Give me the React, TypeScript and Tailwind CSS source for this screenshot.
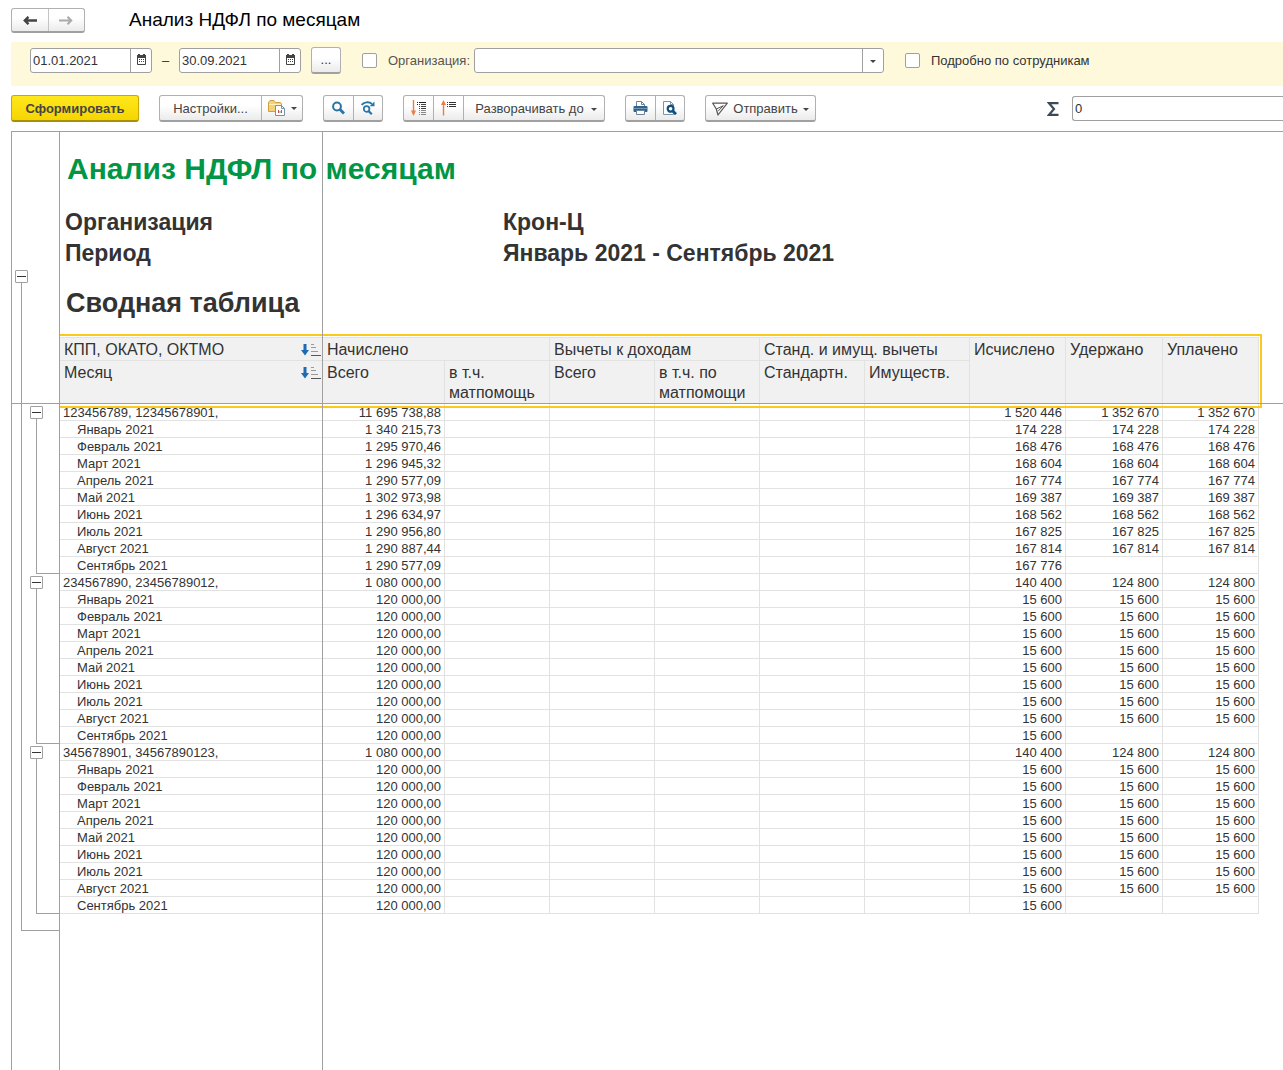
import type { ReactNode } from 'react';

interface Group {
  code: string;
  total: string[];
  months: string[][];
}

const monthNames = [
  'Январь 2021', 'Февраль 2021', 'Март 2021', 'Апрель 2021', 'Май 2021',
  'Июнь 2021', 'Июль 2021', 'Август 2021', 'Сентябрь 2021',
];

// Each row: accrued, calculated, withheld, paid
const flatMonths: string[][] = monthNames.map((_, i) =>
  i < 8 ? ['120 000,00', '15 600', '15 600', '15 600'] : ['120 000,00', '15 600', '', '']
);

const groups: Group[] = [
  {
    code: '123456789, 12345678901,',
    total: ['11 695 738,88', '1 520 446', '1 352 670', '1 352 670'],
    months: [
      ['1 340 215,73', '174 228', '174 228', '174 228'],
      ['1 295 970,46', '168 476', '168 476', '168 476'],
      ['1 296 945,32', '168 604', '168 604', '168 604'],
      ['1 290 577,09', '167 774', '167 774', '167 774'],
      ['1 302 973,98', '169 387', '169 387', '169 387'],
      ['1 296 634,97', '168 562', '168 562', '168 562'],
      ['1 290 956,80', '167 825', '167 825', '167 825'],
      ['1 290 887,44', '167 814', '167 814', '167 814'],
      ['1 290 577,09', '167 776', '', ''],
    ],
  },
  { code: '234567890, 23456789012,', total: ['1 080 000,00', '140 400', '124 800', '124 800'], months: flatMonths },
  { code: '345678901, 34567890123,', total: ['1 080 000,00', '140 400', '124 800', '124 800'], months: flatMonths },
];

const groupClass =
  'flex h-[27px] shrink-0 rounded-[3px] border border-[#b0b0b0] border-b-2 border-b-[#a0a0a0] bg-linear-to-b from-white from-40% to-[#ebebeb] text-[#444]';
const partClass = 'flex items-center justify-center border-r border-[#b0b0b0] last:border-r-0';

function Caret() {
  return (
    <svg className="h-[4px] w-[6px] shrink-0" viewBox="0 0 6 4" fill="#444" aria-hidden="true">
      <path d="M0 1h6L3 4z" />
    </svg>
  );
}

function CalendarIcon() {
  return (
    <svg className="h-[11px] w-[9px]" viewBox="0 0 9 11" aria-hidden="true">
      <path d="M.5 2.5h8v8h-8z" fill="#fff" stroke="#444" />
      <path d="M0 1h9v3H0zM1 0h2v2H1zM6 0h2v2H6z" fill="#444" />
      <path d="M2 5.5h5M2 7.5h5" stroke="#444" strokeDasharray="1 1" />
    </svg>
  );
}

function MagnifierIcon() {
  return (
    <svg className="h-[14px] w-[13px]" viewBox="0 0 13 14" fill="none" stroke="#2874a6" aria-hidden="true">
      <circle cx="5" cy="5.5" r="3.9" strokeWidth="2" />
      <path d="M8 8.5l4 4" strokeWidth="2.8" />
    </svg>
  );
}

function SearchNextIcon() {
  return (
    <svg className="h-[14px] w-[14px]" viewBox="0 0 14 14" fill="none" stroke="#2874a6" aria-hidden="true">
      <path d="M.7 4C2.5 1 8 .3 11 3" strokeWidth="1.9" />
      <path d="M13.5.4v4.8H8.7z" fill="#2874a6" stroke="none" />
      <circle cx="5.6" cy="8" r="2.8" strokeWidth="1.7" />
      <path d="M7.8 10.2l3 3" strokeWidth="2.2" />
    </svg>
  );
}

function FolderReportIcon() {
  return (
    <svg className="h-[16px] w-[17px]" viewBox="0 0 17 16" aria-hidden="true">
      <path d="M.5 11.5v-9L2 .5h4l1.5 2h5l1 1.5v7.5z" fill="#f3d37a" stroke="#cf9f3c" />
      <path d="M1 4.5h12" stroke="#fff3c4" />
      <path d="M7.5 5.5h6l3 3v7h-9z" fill="#fff" stroke="#7a92a8" />
      <path d="M13.5 5.5v3h3" fill="none" stroke="#7a92a8" />
      <path d="M10.5 13v-3M13.5 13v-3" stroke="#c0504d" />
      <path d="M12 13v-2" stroke="#5b9a5b" />
    </svg>
  );
}

function ExpandIcon() {
  return (
    <svg className="h-[16px] w-[15px]" viewBox="0 0 15 16" fill="none" aria-hidden="true">
      <path d="M2.5 0v13" stroke="#f07a45" strokeWidth="1.4" />
      <path d="M0 10.5h5L2.5 16z" fill="#f07a45" />
      <path d="M6 2.5h1M8 2.5h7M6 4.5h1" stroke="#222" />
      <path d="M8 4.5h1M10 4.5h5M8 6.5h1M10 6.5h5M8 8.5h1M10 8.5h5" stroke="#444" />
      <path d="M8 10.5h1M10 10.5h5M8 12.5h1M10 12.5h5M8 14.5h1M10 14.5h5" stroke="#888" />
    </svg>
  );
}

function CollapseIcon() {
  return (
    <svg className="h-[16px] w-[15px]" viewBox="0 0 15 16" fill="none" aria-hidden="true">
      <path d="M2.5 2v13.5" stroke="#f07a45" strokeWidth="1.4" />
      <path d="M0 5h5L2.5 0z" fill="#f07a45" />
      <path d="M6 2.5h1M8 2.5h7M6 4.5h1M8 4.5h7M6 6.5h1M8 6.5h7" stroke="#333" />
    </svg>
  );
}

function PrinterIcon() {
  return (
    <svg className="h-[14px] w-[15px]" viewBox="0 0 15 14" aria-hidden="true">
      <path d="M3.5 6V.5h5l3 3V6" fill="#fff" stroke="#6b8299" />
      <path d="M8.5.5v3h3" fill="none" stroke="#6b8299" />
      <rect x=".5" y="5" width="14" height="6" rx="1" fill="#2f628c" />
      <path d="M1 7.5h13" stroke="#6f97b8" />
      <path d="M3.5 9.5h8v4h-8z" fill="#fff" stroke="#6b8299" />
    </svg>
  );
}

function PreviewIcon() {
  return (
    <svg className="h-[14px] w-[14px]" viewBox="0 0 14 14" fill="none" aria-hidden="true">
      <path d="M.5.5h7l3 3v10H.5z" fill="#fff" stroke="#8093a5" />
      <path d="M7.5.5v3h3" stroke="#8093a5" />
      <circle cx="7.6" cy="7.8" r="2.9" fill="#fff" stroke="#0f4f80" strokeWidth="2.2" />
      <path d="M9.8 10l3.2 3.2" stroke="#0f4f80" strokeWidth="2.8" />
    </svg>
  );
}

function SendIcon() {
  return (
    <svg className="h-[14px] w-[16px] shrink-0" viewBox="0 0 16 14" fill="none" stroke="#555" strokeLinejoin="round" aria-hidden="true">
      <path d="M.7 1.2h14.6L6 13 4.3 7z" strokeWidth="1.2" />
      <path d="M4.3 7l7-3.3-5 5.2" />
    </svg>
  );
}

function SortIcon() {
  return (
    <svg className="mr-px h-[14px] w-[20px] shrink-0" viewBox="0 0 20 14" aria-hidden="true">
      <path d="M2.5 1h3v6H8l-4 5.5L0 7h2.5z" fill="#1c6cb5" />
      <path d="M10 1.5h3M10 4.5h5M10 8.5h7" stroke="#999" fill="none" />
      <path d="M10 12.5h10" stroke="#555" fill="none" />
    </svg>
  );
}

function ArrowIcon({ color, back }: { color: string; back?: boolean }) {
  return (
    <svg className="h-[9px] w-[14px]" viewBox="0 0 14 9" fill="none" stroke={color} strokeWidth="2" aria-hidden="true">
      {back ? <path d="M14 4.5H2M5.5.8L1.8 4.5l3.7 3.7" strokeWidth="2.4" /> : <path d="M0 4.5h12M8.5.8l3.7 3.7-3.7 3.7" />}
    </svg>
  );
}

function DateField({ id, label, value }: { id: string; label: string; value: string }) {
  return (
    <div className="flex h-[25px] w-[122px] shrink-0 overflow-hidden rounded-[3px] border border-[#a0a0a0] bg-white">
      <input id={id} aria-label={label} defaultValue={value} className="w-[100px] border-r border-[#a0a0a0] px-[2px] text-[#333] outline-none" />
      <button type="button" aria-label="Календарь" className="flex flex-1 items-center justify-center pb-[2px]">
        <CalendarIcon />
      </button>
    </div>
  );
}

function CollapseButton({ label }: { label: string }) {
  return (
    <button type="button" aria-label={label} className="flex h-[13px] w-[13px] items-center justify-center rounded-[1px] border border-[#a0a0a0] bg-white">
      <span className="h-px w-[9px] bg-[#333]" />
    </button>
  );
}

function HeadCell({ children, colSpan, rowSpan, top }: { children: ReactNode; colSpan?: number; rowSpan?: number; top?: boolean }) {
  return (
    <th
      colSpan={colSpan}
      rowSpan={rowSpan}
      className={`border-r border-b border-[#e2e2e2] bg-[#f1f1f1] pt-[2px] pl-[4px] text-left align-top font-normal ${top ? 'border-t' : ''}`}
    >
      {children}
    </th>
  );
}

function DataRow({ label, values, indent }: { label: string; values: string[]; indent?: boolean }) {
  const cells = [values[0], '', '', '', '', '', values[1], values[2], values[3]];
  return (
    <tr className="h-[17px]">
      <td className={`border-r border-b border-[#e2e2e2] pt-[2px] ${indent ? 'pl-[17px]' : 'pl-[3px]'}`}>{label}</td>
      {cells.map((value, i) => (
        <td key={i} className="border-r border-b border-[#e2e2e2] pt-[2px] pr-[3px] text-right">{value}</td>
      ))}
    </tr>
  );
}

export default function App() {
  return (
    <div className="flex min-h-screen flex-col overflow-hidden bg-white pl-[11px] font-['Liberation_Sans',Arial,sans-serif] text-[13px] text-[#333]">
      <header className="flex h-[42px] items-center gap-11 pb-px">
        <nav className="flex h-[25px] w-[74px] rounded-[3px] border border-[#b0b0b0] border-b-2 border-b-[#a0a0a0] bg-linear-to-b from-white from-40% to-[#ebebeb]">
          <button type="button" aria-label="Назад" className="flex flex-1 items-center justify-center border-r border-[#c4c4c4]">
            <ArrowIcon color="#444" back />
          </button>
          <button type="button" aria-label="Вперед" className="flex flex-1 items-center justify-center">
            <ArrowIcon color="#aaa" />
          </button>
        </nav>
        <h1 className="text-[19px] text-black">Анализ НДФЛ по месяцам</h1>
      </header>

      <div className="flex h-[44px] items-center bg-[#fff9dc] pr-4 pb-[7px] pl-[19px]">
        <DateField id="from" label="Начало периода" value="01.01.2021" />
        <span className="w-[27px] text-center">–</span>
        <DateField id="to" label="Конец периода" value="30.09.2021" />
        <button type="button" aria-label="Выбрать период" className="ml-[10px] h-[27px] w-[30px] rounded-[3px] border border-[#b0b0b0] border-b-2 border-b-[#a0a0a0] bg-linear-to-b from-white from-40% to-[#ebebeb]">
          ...
        </button>
        <input id="use-org" type="checkbox" aria-label="Отбор по организации" className="ml-[21px] h-[15px] w-[15px] shrink-0 appearance-none rounded-[2px] border border-[#a0a0a0] bg-white checked:bg-[#2874a6]" />
        <label htmlFor="org" className="ml-[11px] w-[86px] shrink-0 whitespace-nowrap text-[#555]">Организация:</label>
        <div className="relative h-[25px] w-[410px]">
          <select id="org" className="h-full w-full appearance-none rounded-[3px] border border-[#a0a0a0] bg-white px-1 outline-none">
            <option value=""></option>
          </select>
          <span className="pointer-events-none absolute inset-y-px right-px flex w-[21px] items-center justify-center border-l border-[#a0a0a0]">
            <Caret />
          </span>
        </div>
        <input id="details" type="checkbox" className="ml-[21px] h-[15px] w-[15px] shrink-0 appearance-none rounded-[2px] border border-[#a0a0a0] bg-white checked:bg-[#2874a6]" />
        <label htmlFor="details" className="ml-[11px] whitespace-nowrap">Подробно по сотрудникам</label>
      </div>

      <div className="flex items-center gap-5 py-[9px]">
        <button type="button" className="h-[27px] w-[128px] shrink-0 rounded-[3px] border border-[#c9ab00] border-b-2 border-b-[#a89000] bg-linear-to-b from-[#ffe81a] to-[#f6d500] pt-px font-bold text-[#444]">
          Сформировать
        </button>
        <div className={groupClass}>
          <button type="button" className={`${partClass} w-[102px] pt-px`}>Настройки...</button>
          <button type="button" aria-label="Варианты отчета" className={`${partClass} w-[40px] gap-[6px]`}>
            <FolderReportIcon />
            <Caret />
          </button>
        </div>
        <div className={groupClass}>
          <button type="button" aria-label="Найти" className={`${partClass} w-[30px]`}><MagnifierIcon /></button>
          <button type="button" aria-label="Найти далее" className={`${partClass} w-[28px]`}><SearchNextIcon /></button>
        </div>
        <div className={groupClass}>
          <button type="button" aria-label="Развернуть" className={`${partClass} w-[30px]`}><ExpandIcon /></button>
          <button type="button" aria-label="Свернуть" className={`${partClass} w-[30px]`}><CollapseIcon /></button>
          <button type="button" className={`${partClass} w-[140px] gap-[7px] pt-px pl-[4px]`}>
            Разворачивать до
            <Caret />
          </button>
        </div>
        <div className={groupClass}>
          <button type="button" aria-label="Печать" className={`${partClass} w-[30px]`}><PrinterIcon /></button>
          <button type="button" aria-label="Просмотр" className={`${partClass} w-[28px]`}><PreviewIcon /></button>
        </div>
        <button type="button" className={`${groupClass} w-[111px] items-center justify-center gap-[5px] pt-px`}>
          <SendIcon />
          Отправить
          <Caret />
        </button>
        <div className="ml-auto flex items-center gap-[13px]">
          <label htmlFor="sum" aria-label="Сумма">
            <svg className="h-[14px] w-[12px]" viewBox="0 0 12 14" fill="none" stroke="#3a4a57" strokeWidth="2.2" aria-hidden="true">
              <path d="M11.5 1.1H2l5 5.9-5 5.9h9.5" />
            </svg>
          </label>
          <input id="sum" defaultValue="0" className="h-[25px] w-[211px] rounded-l-[3px] border border-r-0 border-[#a0a0a0] bg-white px-[2px] outline-none" />
        </div>
      </div>

      <main className="relative flex flex-1 border-t border-l border-[#a0a0a0]">
        {/* outline gutter */}
        <aside className="w-[47px] shrink-0 pt-[138px] pl-[3px]">
          <CollapseButton label="Свернуть отчет" />
          <div className="ml-[6px] border-b border-l border-[#a0a0a0] pt-[123px] pb-[16px] pl-[8px]">
            <div className="flex flex-col gap-[2px]">
              {groups.map((group) => (
                <div key={group.code}>
                  <CollapseButton label={`Свернуть ${group.code}`} />
                  <div className="ml-[6px] h-[155px] border-b border-l border-[#a0a0a0]" />
                </div>
              ))}
            </div>
          </div>
        </aside>

        <section className="relative min-w-0 flex-1 border-l border-[#a0a0a0] pt-[19px]">
          <h2 className="pl-[7px] text-[30px] leading-[36px] font-bold text-[#009646]">Анализ НДФЛ по месяцам</h2>
          <dl className="mt-[20px] grid grid-cols-[438px_1fr] pl-[5px] text-[23px] leading-[31px] font-bold">
            <dt>Организация</dt>
            <dd>Крон-Ц</dd>
            <dt>Период</dt>
            <dd>Январь 2021 - Сентябрь 2021</dd>
          </dl>
          <h3 className="mt-[17px] pl-[6px] text-[27px] leading-[34px] font-bold">Сводная таблица</h3>

          <div className="relative mt-[17px] w-fit">
            <table className="w-[1199px] table-fixed border-separate border-spacing-0 leading-[14px]">
              <colgroup>
                <col className="w-[263px]" />
                <col className="w-[122px]" />
                <col className="w-[105px]" />
                <col className="w-[105px]" />
                <col className="w-[105px]" />
                <col className="w-[105px]" />
                <col className="w-[105px]" />
                <col className="w-[96px]" />
                <col className="w-[97px]" />
                <col className="w-[96px]" />
              </colgroup>
              <thead className="text-[16px] leading-[20px]">
                <tr className="h-[24px]">
                  <HeadCell top>
                    <span className="flex items-center justify-between">КПП, ОКАТО, ОКТМО<SortIcon /></span>
                  </HeadCell>
                  <HeadCell top colSpan={2}>Начислено</HeadCell>
                  <HeadCell top colSpan={2}>Вычеты к доходам</HeadCell>
                  <HeadCell top colSpan={2}>Станд. и имущ. вычеты</HeadCell>
                  <HeadCell top rowSpan={2}>Исчислено</HeadCell>
                  <HeadCell top rowSpan={2}>Удержано</HeadCell>
                  <HeadCell top rowSpan={2}>Уплачено</HeadCell>
                </tr>
                <tr className="h-[43px]">
                  <HeadCell>
                    <span className="flex items-center justify-between">Месяц<SortIcon /></span>
                  </HeadCell>
                  <HeadCell>Всего</HeadCell>
                  <HeadCell>в т.ч. матпомощь</HeadCell>
                  <HeadCell>Всего</HeadCell>
                  <HeadCell>в т.ч. по матпомощи</HeadCell>
                  <HeadCell>Стандартн.</HeadCell>
                  <HeadCell>Имуществ.</HeadCell>
                </tr>
              </thead>
              {groups.map((group) => (
                <tbody key={group.code}>
                  <DataRow label={group.code} values={group.total} />
                  {group.months.map((values, i) => (
                    <DataRow key={monthNames[i]} label={monthNames[i]} values={values} indent />
                  ))}
                </tbody>
              ))}
            </table>
            {/* selection frame over the header */}
            <div className="pointer-events-none absolute -top-[3px] -right-[3px] left-0 h-[74px] border-2 border-l-0 border-[#fbc91c]" />
          </div>

          <div className="pointer-events-none absolute inset-y-0 left-[262px] border-l border-[#a0a0a0]" />
        </section>

        <div className="pointer-events-none absolute inset-x-0 top-[271px] border-t border-[#a0a0a0]" />
      </main>
    </div>
  );
}
